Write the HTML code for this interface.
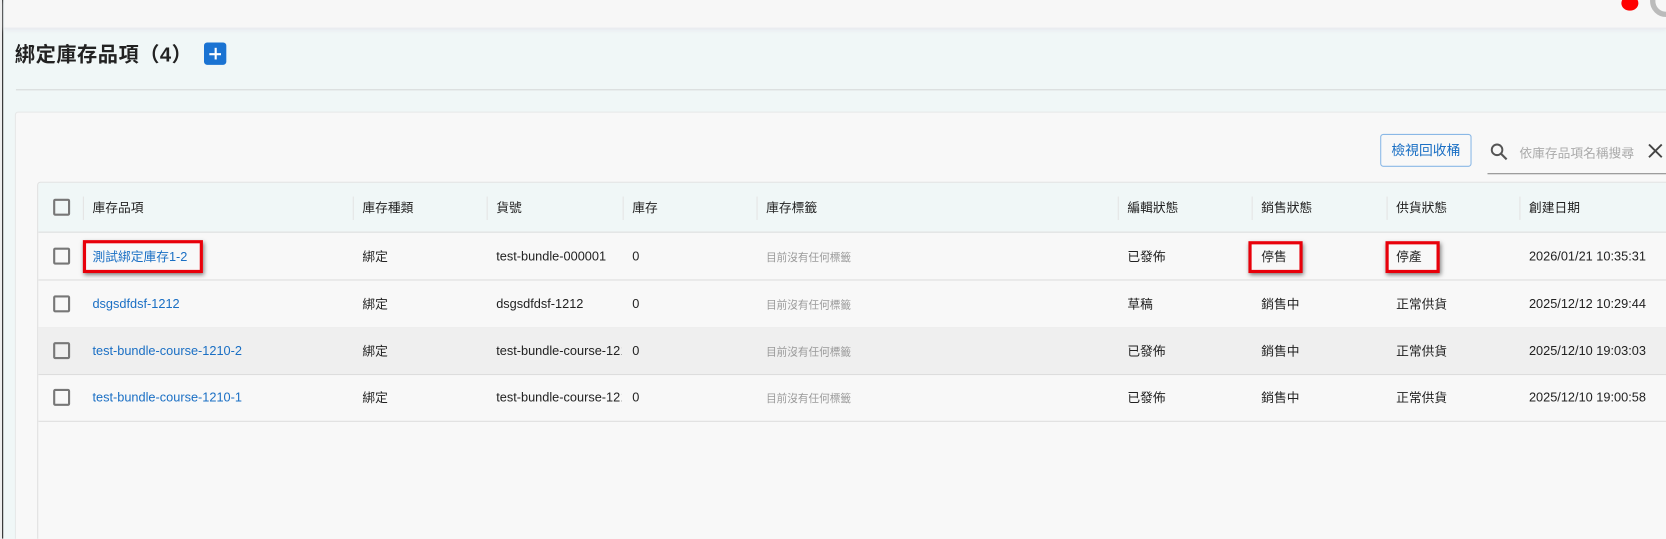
<!DOCTYPE html>
<html><head><meta charset="utf-8"><style>
*{box-sizing:border-box;margin:0;padding:0}
html,body{width:1666px;height:539px;overflow:hidden;background:#f0f7f7}
#w{position:absolute;left:0;top:0;width:1568px;height:507px;transform:scale(1.0625);transform-origin:0 0;font-family:"Liberation Sans","Noto Sans CJK TC",sans-serif;color:#222;overflow:hidden}
.lb{position:absolute;left:0;top:0;width:3px;height:507px;background:#eee;border-right:1px solid #222}
.top{position:absolute;left:4px;top:0;width:1564px;height:27px;background:#f7f7f7;border-bottom:1px solid #e8eaee;box-shadow:0 1px 4px #e6e8ee}
.title{position:absolute;left:14px;top:37px;font-size:19px;font-weight:bold;color:#222;letter-spacing:0.5px}
.plus{position:absolute;left:192px;top:40px;width:21px;height:21px;background:#1a73d2;border-radius:3px;color:#fff}
.plus:before{content:"";position:absolute;left:5px;top:9.5px;width:11px;height:2px;background:#fff}
.plus:after{content:"";position:absolute;left:9.5px;top:5px;width:2px;height:11px;background:#fff}
.hr{position:absolute;left:15px;top:84px;width:1553px;height:1px;background:#d5d8d8}
.panel{position:absolute;left:14px;top:105px;width:1560px;height:410px;background:#f8f8f8;border:1px solid #e6e8e8;border-radius:3px}
.btn{position:absolute;left:1299px;top:126px;width:86px;height:31px;border:1px solid #8ab8e6;border-radius:3px;color:#1a6fc4;font-size:13px;text-align:center;line-height:29px;background:#f8f8f8}
.search{position:absolute;left:1400px;top:126px;width:170px;height:38px;border-bottom:1px solid #888}
.search .ph{position:absolute;left:30px;top:9px;font-size:12px;color:#aaa}
.tbl{position:absolute;left:35px;top:171px;width:1540px;height:345px;border:1px solid #e0e0e0;border-radius:3px;background:#f8f8f8;overflow:hidden}
.hd{position:absolute;left:0;top:0;width:100%;height:47px;background:#f0f7f7;border-bottom:1px solid #ddd}
.row{position:absolute;left:0;width:100%;height:45px;border-bottom:1px solid #ddd}
.c{position:absolute;font-size:12px;top:50%;transform:translateY(-50%);white-space:nowrap;color:#222}
.sep{position:absolute;top:13px;width:1px;height:22px;background:#e4e4e4}
.cb{position:absolute;left:14px;top:50%;margin-top:-8px;width:16px;height:16px;border:2px solid #777;border-radius:2px}
.a{color:#1a6fc4}
.g{color:#999;font-size:10px}
.red{position:absolute;border:3px solid #e8000a;box-shadow:1px 2px 4px rgba(0,0,0,.5)}
</style></head><body><div id="w">
<div class="lb"></div>
<div class="top"></div>
<div style="position:absolute;left:1526px;top:-4px;width:16px;height:14px;background:#f00;border-radius:50%"></div>
<div style="position:absolute;left:1553px;top:-14px;width:30px;height:30px;border-radius:50%;border:5px solid #bbb"></div>
<div class="title">綁定庫存品項（4）</div>
<div class="plus"></div>
<div class="hr"></div>
<div class="panel"></div>
<div class="btn">檢視回收桶</div>
<div class="search">
<svg style="position:absolute;left:2px;top:8px" width="18" height="18" viewBox="0 0 18 18"><circle cx="7" cy="7" r="5" fill="none" stroke="#555" stroke-width="1.8"/><path d="M10.5 10.5L16 16" stroke="#555" stroke-width="2"/></svg>
<div class="ph">依庫存品項名稱搜尋</div>
<svg style="position:absolute;left:151px;top:9px" width="14" height="14" viewBox="0 0 14 14"><path d="M1 1L13 13M13 1L1 13" stroke="#444" stroke-width="1.8"/></svg>
</div>
<div class="tbl">
<div class="hd">
<div class="cb"></div>
<div class="sep" style="left:42px"></div><div class="c" style="left:51px">庫存品項</div>
<div class="sep" style="left:296px"></div><div class="c" style="left:305px">庫存種類</div>
<div class="sep" style="left:422px"></div><div class="c" style="left:431px">貨號</div>
<div class="sep" style="left:550px"></div><div class="c" style="left:559px">庫存</div>
<div class="sep" style="left:676px"></div><div class="c" style="left:685px">庫存標籤</div>
<div class="sep" style="left:1016px"></div><div class="c" style="left:1025px">編輯狀態</div>
<div class="sep" style="left:1142px"></div><div class="c" style="left:1151px">銷售狀態</div>
<div class="sep" style="left:1269px"></div><div class="c" style="left:1278px">供貨狀態</div>
<div class="sep" style="left:1394px"></div><div class="c" style="left:1403px">創建日期</div>
</div>
<div class="row" style="top:47px"><div class="cb"></div><div class="c a" style="left:51px">測試綁定庫存1-2</div><div class="c" style="left:305px">綁定</div><div class="c" style="left:431px">test-bundle-000001</div><div class="c" style="left:559px">0</div><div class="c g" style="left:685px">目前沒有任何標籤</div><div class="c" style="left:1025px">已發佈</div><div class="c" style="left:1151px">停售</div><div class="c" style="left:1278px">停產</div><div class="c" style="left:1403px">2026/01/21 10:35:31</div></div>
<div class="row" style="top:92px"><div class="cb"></div><div class="c a" style="left:51px">dsgsdfdsf-1212</div><div class="c" style="left:305px">綁定</div><div class="c" style="left:431px">dsgsdfdsf-1212</div><div class="c" style="left:559px">0</div><div class="c g" style="left:685px">目前沒有任何標籤</div><div class="c" style="left:1025px">草稿</div><div class="c" style="left:1151px">銷售中</div><div class="c" style="left:1278px">正常供貨</div><div class="c" style="left:1403px">2025/12/12 10:29:44</div></div>
<div class="row" style="top:136px;background:#efefef"><div class="cb"></div><div class="c a" style="left:51px">test-bundle-course-1210-2</div><div class="c" style="left:305px">綁定</div><div class="c" style="left:431px;width:118px;overflow:hidden">test-bundle-course-1210-2</div><div class="c" style="left:559px">0</div><div class="c g" style="left:685px">目前沒有任何標籤</div><div class="c" style="left:1025px">已發佈</div><div class="c" style="left:1151px">銷售中</div><div class="c" style="left:1278px">正常供貨</div><div class="c" style="left:1403px">2025/12/10 19:03:03</div></div>
<div class="row" style="top:180px"><div class="cb"></div><div class="c a" style="left:51px">test-bundle-course-1210-1</div><div class="c" style="left:305px">綁定</div><div class="c" style="left:431px;width:118px;overflow:hidden">test-bundle-course-1210-1</div><div class="c" style="left:559px">0</div><div class="c g" style="left:685px">目前沒有任何標籤</div><div class="c" style="left:1025px">已發佈</div><div class="c" style="left:1151px">銷售中</div><div class="c" style="left:1278px">正常供貨</div><div class="c" style="left:1403px">2025/12/10 19:00:58</div></div>
</div>
<div class="red" style="left:78px;top:226px;width:113px;height:31px"></div>
<div class="red" style="left:1175px;top:227px;width:51px;height:30px"></div>
<div class="red" style="left:1304px;top:227px;width:51px;height:30px"></div>
</div></body></html>
